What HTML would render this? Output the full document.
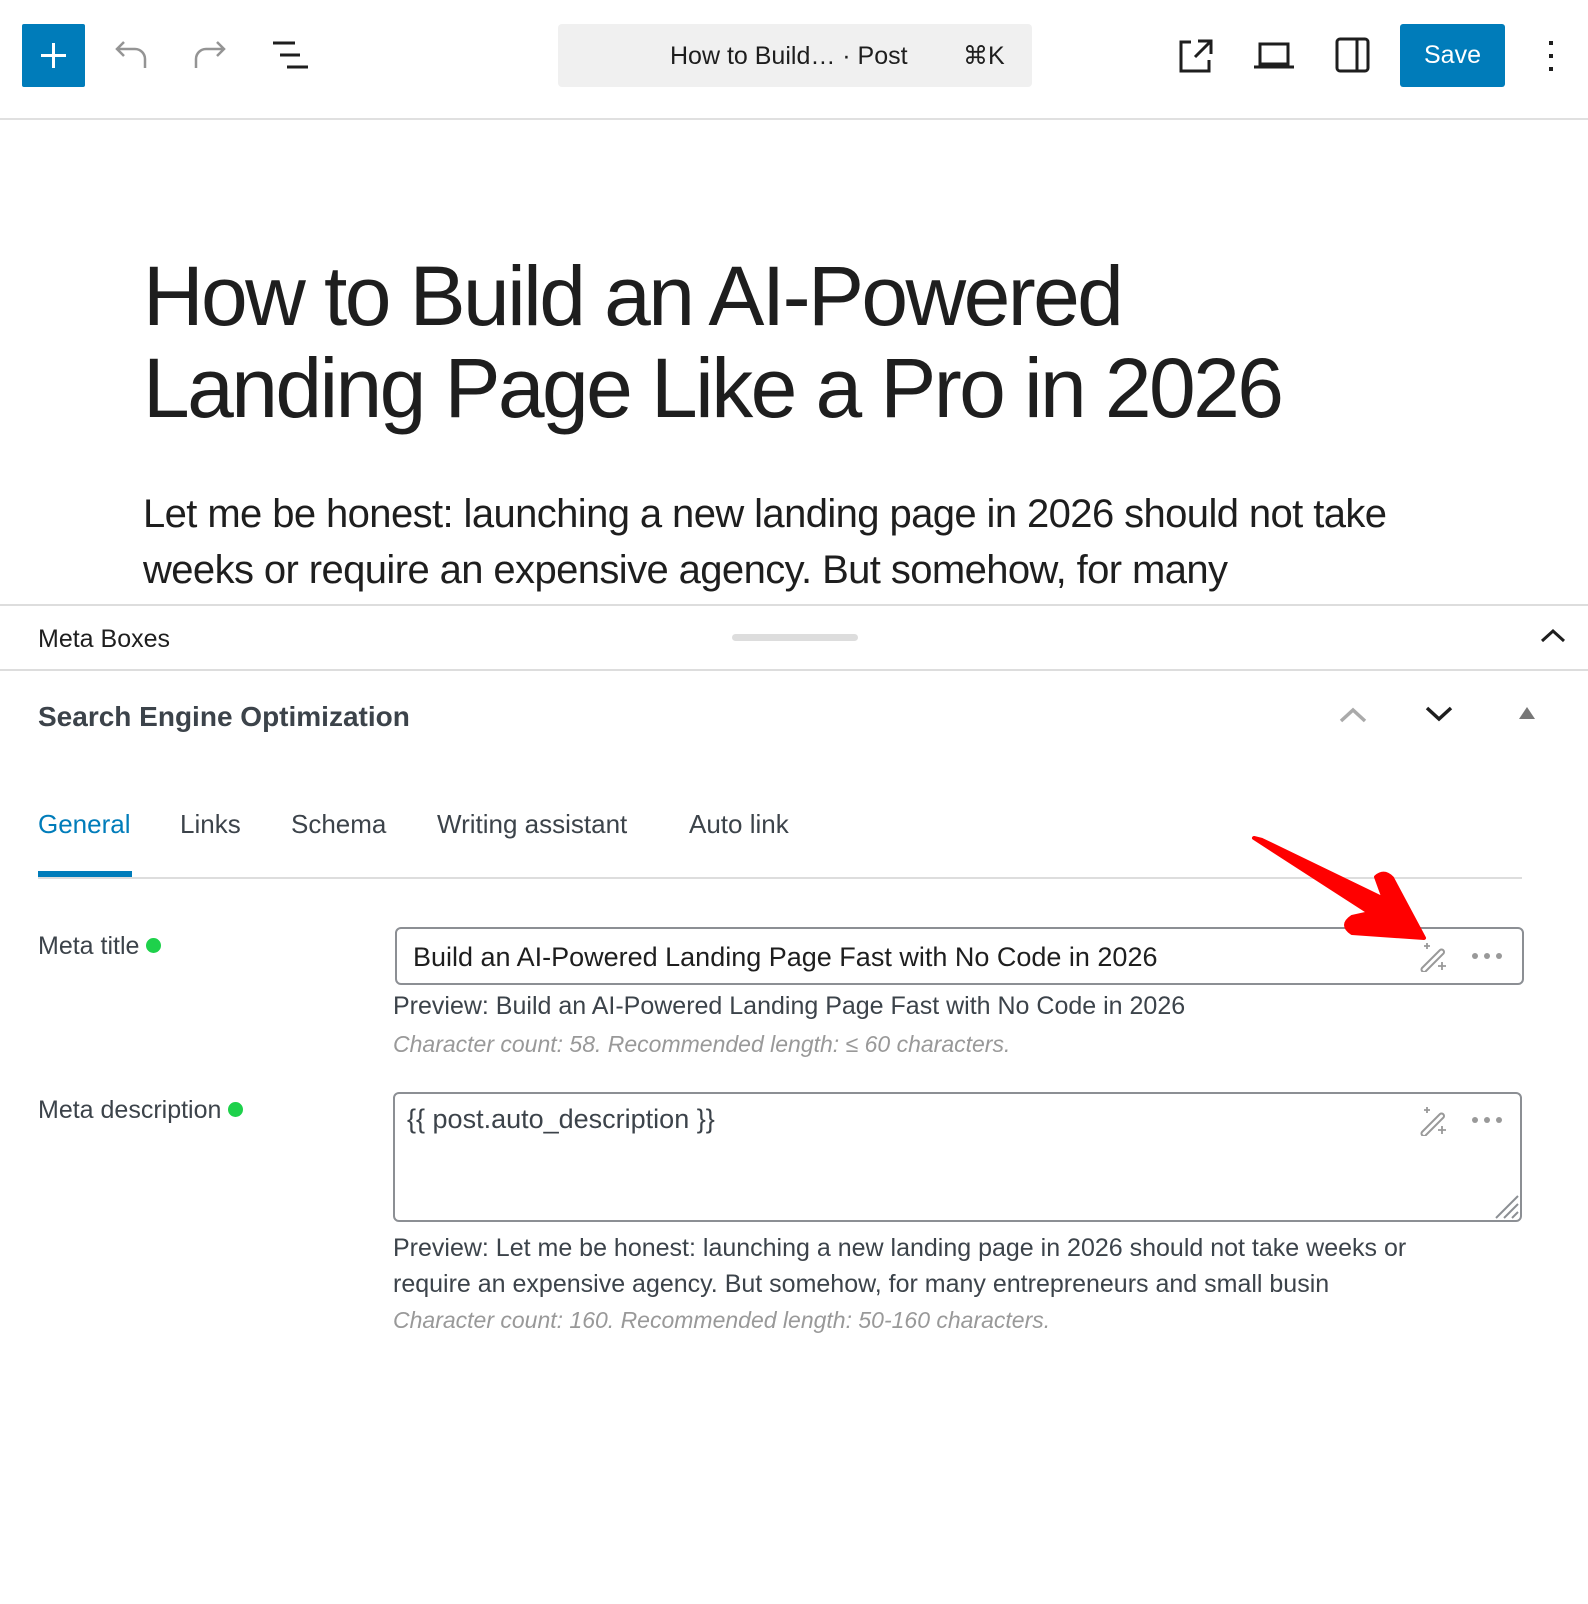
<!DOCTYPE html>
<html><head><meta charset="utf-8"><style>
*{margin:0;padding:0;box-sizing:border-box}
body{width:1588px;height:1364px;overflow:hidden;background:#fff;font-family:"Liberation Sans",sans-serif;color:#1e1e1e;position:relative}
.a{position:absolute}
.tb{top:0;left:0;width:1588px;height:120px;border-bottom:2px solid #e0e0e0}
svg{position:absolute}
</style></head><body>
<div class="a tb"></div>
<div class="a" style="left:22px;top:24px;width:63px;height:63px;background:#007cba;border-radius:2px"></div>
<svg style="left:22px;top:24px" width="63" height="63"><path d="M31.5 19v25M19 31.5h25" stroke="#fff" stroke-width="3"/></svg>
<svg style="left:112px;top:38px" width="40" height="34" fill="none" stroke="#949494" stroke-width="2.5"><path d="M12 4 5 11l7 7M5 11h18a10 10 0 0 1 10 10v9"/></svg>
<svg style="left:190px;top:38px" width="40" height="34" fill="none" stroke="#949494" stroke-width="2.5"><path d="M27 4l7 7-7 7M34 11H16A10 10 0 0 0 6 21v9"/></svg>
<svg style="left:270px;top:40px" width="40" height="32" stroke="#1e1e1e" stroke-width="3"><path d="M3 3h22M10 15h20M17 27h21"/></svg>
<div class="a" style="left:558px;top:24px;width:474px;height:63px;background:#f0f0f0;border-radius:4px"></div>
<div class="a" style="left:670px;top:40px;font-size:25px;line-height:32px">How to Build… · Post</div>
<div class="a" style="left:963px;top:40px;font-size:25px;line-height:32px">⌘K</div>
<svg style="left:1178px;top:38px" width="36" height="36" fill="none" stroke="#1e1e1e" stroke-width="3"><path d="M13 4H3v29h28V22M20 3h13v13M33 3 17 19"/></svg>
<svg style="left:1253px;top:40px" width="42" height="30" fill="none" stroke="#1e1e1e" stroke-width="3"><path d="M7 4h28v20H7zM1 27h40"/></svg>
<svg style="left:1335px;top:37px" width="36" height="36" fill="none" stroke="#1e1e1e" stroke-width="3"><rect x="2" y="2" width="31" height="32" rx="3"/><path d="M22 2v32"/></svg>
<div class="a" style="left:1400px;top:24px;width:105px;height:63px;background:#007cba;border-radius:3px;color:#fff;font-size:25px;text-align:center;line-height:63px">Save</div>
<svg style="left:1545px;top:40px" width="12" height="32" fill="#1e1e1e"><rect x="4" y="1" width="4" height="4"/><rect x="4" y="14" width="4" height="4"/><rect x="4" y="27" width="4" height="4"/></svg>

<div class="a" style="left:143px;top:250px;font-size:84px;line-height:92px;letter-spacing:-2.6px;white-space:nowrap">How to Build an AI-Powered<br>Landing Page Like a Pro in 2026</div>
<div class="a" style="left:143px;top:486px;font-size:40px;line-height:56px;letter-spacing:-0.6px;white-space:nowrap;height:118px;overflow:hidden">Let me be honest: launching a new landing page in 2026 should not take<br>weeks or require an expensive agency. But somehow, for many<br>entrepreneurs and small businesses, it still does.</div>

<div class="a" style="left:0;top:604px;width:1588px;height:1000px;background:#fff;border-top:2px solid #ddd"></div>
<div class="a" style="left:38px;top:624px;font-size:25px;line-height:30px">Meta Boxes</div>
<div class="a" style="left:732px;top:634px;width:126px;height:7px;background:#ddd;border-radius:4px"></div>
<svg style="left:1540px;top:628px" width="26" height="16" fill="none" stroke="#1e1e1e" stroke-width="3"><path d="M2 13 13 3l11 10"/></svg>
<div class="a" style="left:0;top:669px;width:1588px;height:2px;background:#ddd"></div>
<div class="a" style="left:38px;top:700px;font-size:28px;line-height:34px;font-weight:bold;color:#3c434a">Search Engine Optimization</div>
<svg style="left:1338px;top:704px" width="30" height="20" fill="none" stroke="#aaa" stroke-width="3.5"><path d="M3 17 15 6l12 11"/></svg>
<svg style="left:1424px;top:704px" width="30" height="20" fill="none" stroke="#1e1e1e" stroke-width="3.5"><path d="M3 4l12 11L27 4"/></svg>
<svg style="left:1518px;top:706px" width="18" height="14" fill="#777"><path d="M9 1l8 12H1z"/></svg>

<div class="a" style="left:38px;top:808px;font-size:26px;line-height:32px;color:#007cba">General</div>
<div class="a" style="left:180px;top:808px;font-size:26px;line-height:32px;color:#3c434a">Links</div>
<div class="a" style="left:291px;top:808px;font-size:26px;line-height:32px;color:#3c434a">Schema</div>
<div class="a" style="left:437px;top:808px;font-size:26px;line-height:32px;color:#3c434a">Writing assistant</div>
<div class="a" style="left:689px;top:808px;font-size:26px;line-height:32px;color:#3c434a">Auto link</div>
<div class="a" style="left:38px;top:877px;width:1484px;height:2px;background:#ddd"></div>
<div class="a" style="left:38px;top:871px;width:94px;height:6px;background:#007cba"></div>

<div class="a" style="left:38px;top:930px;font-size:25px;line-height:32px;color:#3c434a">Meta title <span style="display:inline-block;width:15px;height:15px;border-radius:50%;background:#1ed14b;vertical-align:1px"></span></div>
<div class="a" style="left:395px;top:927px;width:1129px;height:58px;border:2px solid #8c8f94;border-radius:6px"></div>
<div class="a" style="left:413px;top:940px;font-size:27px;line-height:34px">Build an AI-Powered Landing Page Fast with No Code in 2026</div>
<div class="a" style="left:393px;top:990px;font-size:25px;line-height:32px;color:#3c434a">Preview: Build an AI-Powered Landing Page Fast with No Code in 2026</div>
<div class="a" style="left:393px;top:1029px;font-size:23px;line-height:30px;color:#999;font-style:italic">Character count: 58. Recommended length: ≤ 60 characters.</div>

<div class="a" style="left:38px;top:1094px;font-size:25px;line-height:32px;color:#3c434a">Meta description <span style="display:inline-block;width:15px;height:15px;border-radius:50%;background:#1ed14b;vertical-align:1px"></span></div>
<div class="a" style="left:393px;top:1092px;width:1129px;height:130px;border:2px solid #8c8f94;border-radius:6px"></div>
<div class="a" style="left:407px;top:1102px;font-size:27px;line-height:34px;color:#3c434a">{{ post.auto_description }}</div>
<svg style="left:1492px;top:1192px" width="28" height="28" stroke="#8c8f94" stroke-width="2"><path d="M26 4 4 26M26 12 12 26M26 20l-6 6"/></svg>
<div class="a" style="left:393px;top:1230px;font-size:25px;line-height:36px;color:#3c434a;white-space:nowrap">Preview: Let me be honest: launching a new landing page in 2026 should not take weeks or<br>require an expensive agency. But somehow, for many entrepreneurs and small busin</div>
<div class="a" style="left:393px;top:1305px;font-size:23px;line-height:30px;color:#999;font-style:italic">Character count: 160. Recommended length: 50-160 characters.</div>

<svg style="left:1418px;top:940px" width="32" height="32" fill="none" stroke="#999" stroke-width="2"><path d="M4 28 22 10a2.5 2.5 0 0 1 3.5 3.5L7.5 31.5A2.5 2.5 0 0 1 4 28z"/><path d="M9 3v6M6 6h6M24 22v8M20 26h8" stroke-width="1.8"/></svg>
<svg style="left:1470px;top:950px" width="34" height="12" fill="#999"><circle cx="5" cy="6" r="3"/><circle cx="17" cy="6" r="3"/><circle cx="29" cy="6" r="3"/></svg>
<svg style="left:1418px;top:1104px" width="32" height="32" fill="none" stroke="#999" stroke-width="2"><path d="M4 28 22 10a2.5 2.5 0 0 1 3.5 3.5L7.5 31.5A2.5 2.5 0 0 1 4 28z"/><path d="M9 3v6M6 6h6M24 22v8M20 26h8" stroke-width="1.8"/></svg>
<svg style="left:1470px;top:1114px" width="34" height="12" fill="#999"><circle cx="5" cy="6" r="3"/><circle cx="17" cy="6" r="3"/><circle cx="29" cy="6" r="3"/></svg>

<svg style="left:0;top:0" width="1588" height="1364"><path d="M1254 838 L1262 840 L1384 899 L1376 877 Q1384 870 1392 878 L1424 938 L1352 933 Q1340 925 1352 917 L1370 913 Z" fill="#f00" stroke="#f00" stroke-width="4" stroke-linejoin="round"/></svg>
</body></html>
